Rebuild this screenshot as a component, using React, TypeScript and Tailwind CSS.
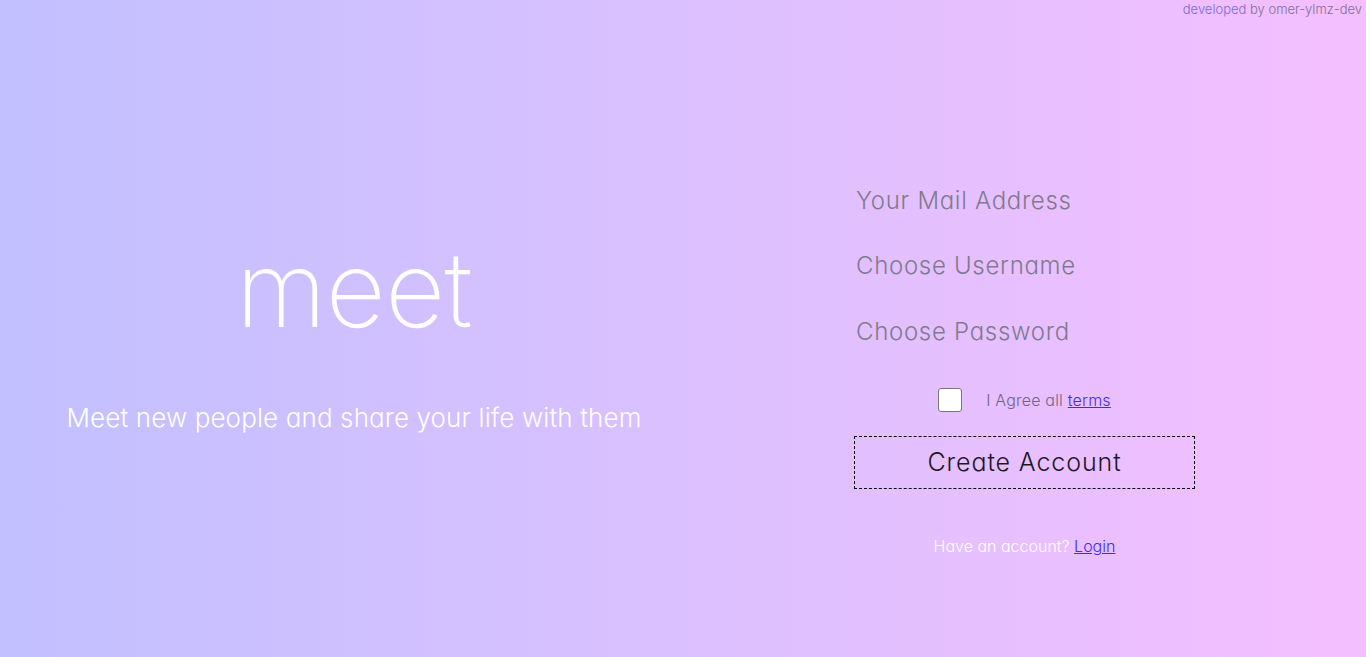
import { useState } from 'react';

const font = "font-['Inter',sans-serif] [font-feature-settings:'cv11']";

export default function App() {
  const [agree, setAgree] = useState(false);

  return (
    <div
      className={`relative flex h-[657px] w-full overflow-hidden bg-[linear-gradient(to_right,#c2c0ff,#dbc0ff_50%,#f5bfff)] ${font}`}
    >
      <div className="absolute right-[4px] top-0 text-[13px] font-light leading-[18px] text-[#7c7296]">
        <span className="text-[#7a6bd6]">developed</span> by omer-ylmz-dev
      </div>

      {/* left: brand */}
      <div className="flex w-[708px] flex-col items-center pt-[224px]">
        <h1 className="text-[104px] font-extralight leading-[130px] tracking-[-0.5px] text-white">meet</h1>
        <p className="mt-[46px] text-[26px] font-light leading-[36px] tracking-[0.12px] text-white">
          Meet new people and share your life with them
        </p>
      </div>

      {/* right: form */}
      <div className="ml-[146px] flex w-[341px] flex-col pt-[175px]">
        <div className="flex flex-col gap-[15.5px]">
          <input
            type="email"
            placeholder="Your Mail Address"
            className="h-[50px] bg-transparent px-[2px] text-[24px] font-light tracking-[0.7px] text-[#555] outline-none placeholder:text-[#7f7a8e]"
          />
          <input
            type="text"
            placeholder="Choose Username"
            className="h-[50px] bg-transparent px-[2px] text-[24px] font-light tracking-[0.7px] text-[#555] outline-none placeholder:text-[#7f7a8e]"
          />
          <input
            type="password"
            placeholder="Choose Password"
            className="h-[50px] bg-transparent px-[2px] text-[24px] font-light tracking-[0.7px] text-[#555] outline-none placeholder:text-[#7f7a8e]"
          />
        </div>

        <label className="mt-[32px] flex h-[24px] items-center justify-center gap-[24px]">
          <button
            type="button"
            onClick={() => setAgree(!agree)}
            className="flex h-[24px] w-[24px] items-center justify-center rounded-[3px] border border-[#767676] bg-white text-[14px] leading-none text-[#333]"
          >
            {agree ? '✓' : ''}
          </button>
          <span className="text-[16px] font-light tracking-[0.2px] text-[#6f6585]">
            I Agree all{' '}
            <a href="#" className="text-[#3c2cf8] underline">
              terms
            </a>
          </span>
        </label>

        <button
          type="button"
          className="mt-[24px] h-[53px] w-full border border-dashed border-black bg-transparent text-[25px] font-light tracking-[0.9px] text-[#1c1826]"
        >
          Create Account
        </button>

        <p className="mt-[45px] text-center text-[16px] font-light leading-[24px] text-white">
          Have an account?{' '}
          <a href="#" className="text-[#3c2cf8] underline">
            Login
          </a>
        </p>
      </div>
    </div>
  );
}
